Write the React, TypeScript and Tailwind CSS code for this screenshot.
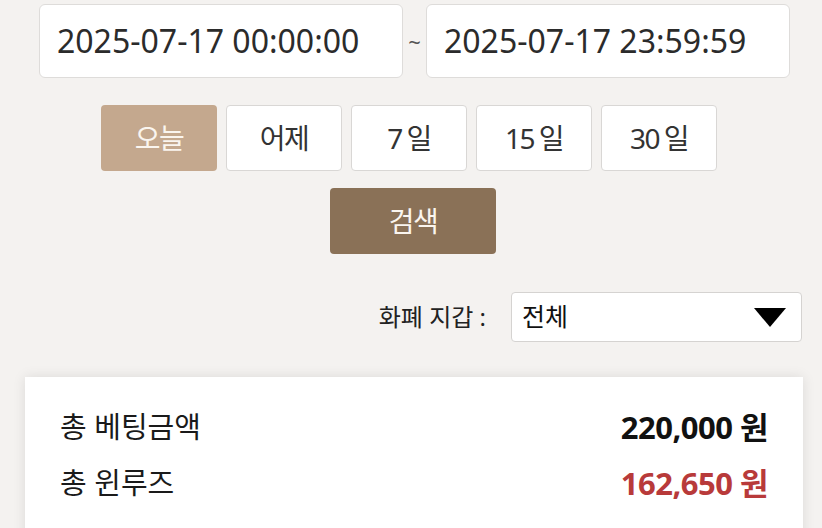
import React, { useState } from 'react';

const periods = ['오늘', '어제', '7 일', '15 일', '30 일'];

function DateBox({ value }: { value: string }) {
  return (
    <div className="flex h-[74px] w-[364px] items-center rounded-[6px] border border-[#dedcda] bg-white pl-[17px] text-[32px] text-[#2b2b2b]">
      {value}
    </div>
  );
}

function SummaryRow({ label, value, tone }: { label: string; value: string; tone?: 'red' }) {
  return (
    <div className="flex h-[56px] items-center justify-between">
      <span className="text-[29px] text-[#1a1a1a]">{label}</span>
      <span className={`text-[31px] font-bold tracking-[-0.5px] ${tone === 'red' ? 'text-[#b83a3a]' : 'text-[#111]'}`}>
        {value}
      </span>
    </div>
  );
}

export default function App() {
  const [active, setActive] = useState(0);

  return (
    <div
      className="h-[528px] w-[822px] overflow-hidden bg-[#f4f2f0]"
      style={{ fontFamily: '"Noto Sans", "Noto Sans CJK KR", sans-serif' }}
    >
      {/* Date range */}
      <div className="flex items-center pl-[39px] pt-[4px]">
        <DateBox value="2025-07-17 00:00:00" />
        <span className="w-[23px] text-center text-[22px] text-[#555]">~</span>
        <DateBox value="2025-07-17 23:59:59" />
      </div>

      {/* Period buttons */}
      <div className="mt-[27px] flex justify-center gap-[9px] pr-[4px]">
        {periods.map((p, i) => (
          <button
            key={p}
            onClick={() => setActive(i)}
            className={`h-[66px] w-[116px] rounded-[4px] text-[28px] tracking-[-1.5px] [word-spacing:-1px] ${
              i === active
                ? 'bg-[#c4a88e] text-[#faf5ef]'
                : 'border border-[#d9d7d5] bg-white text-[#333]'
            }`}
          >
            {p}
          </button>
        ))}
      </div>

      <div className="mt-[17px] flex justify-center pl-[4px]">
        <button className="h-[66px] w-[166px] rounded-[4px] bg-[#8a7157] text-[28px] tracking-[-1.5px] text-[#faf5ef]">
          검색
        </button>
      </div>

      {/* Wallet filter */}
      <div className="mt-[38px] flex items-center justify-end pr-[20px]">
        <span className="mr-[25px] text-[24px] text-[#222]">화폐 지갑 :</span>
        <div className="flex h-[50px] w-[291px] items-center justify-between rounded-[4px] border border-[#d5d3d1] bg-white pl-[10px] pr-[15px]">
          <span className="text-[25px] text-[#111]">전체</span>
          <svg width="32" height="19" viewBox="0 0 32 19">
            <path d="M0 0h32L16 19z" fill="#000" />
          </svg>
        </div>
      </div>

      {/* Summary card */}
      <div className="ml-[25px] mt-[35px] h-[200px] w-[778px] bg-white px-[35px] pt-[22px] shadow-[0_0_12px_rgba(0,0,0,0.1)]">
        <SummaryRow label="총 베팅금액" value="220,000 원" />
        <SummaryRow label="총 윈루즈" value="162,650 원" tone="red" />
      </div>
    </div>
  );
}
